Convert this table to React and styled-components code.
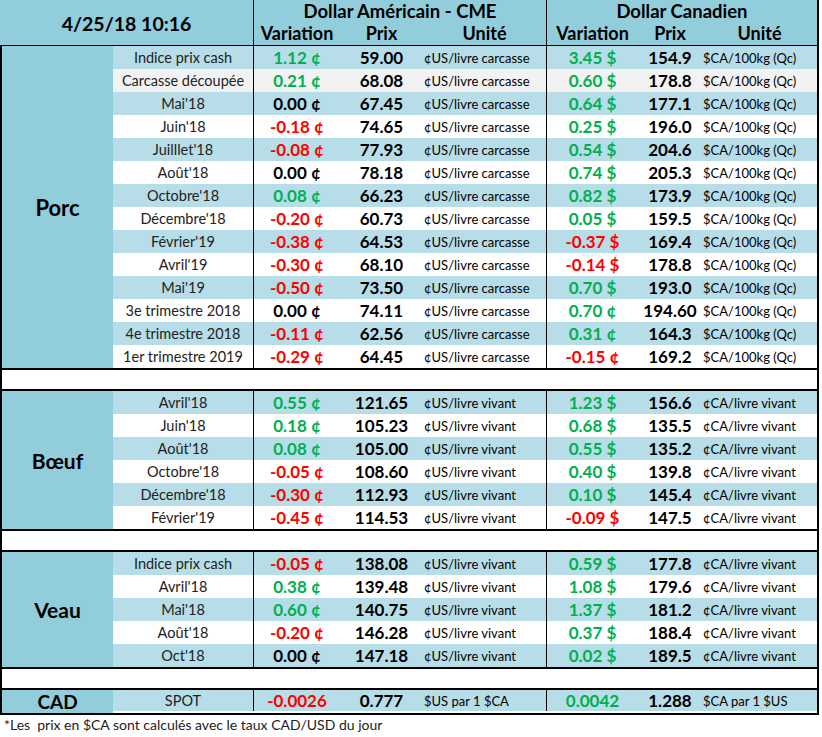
import React from 'react';
import styled, { createGlobalStyle } from 'styled-components';

const GlobalStyle = createGlobalStyle`
  body {
    margin: 0;
    background: #ffffff;
    font-family: Lato, "Open Sans", "Liberation Sans", sans-serif;
    color: #000;
  }
`;

const HEAD_BLUE = '#92CDDC';
const ROW_BLUE = '#B7DEE8';
const GREEN = '#00B050';
const RED = '#FF0000';
const COLS = '140px 87px 83px 123px 92px 64px 115px';

const Page = styled.div`
  width: 822px;
`;

const Sheet = styled.div`
  width: 819px;
  display: flex;
  flex-direction: column;
`;

const Header = styled.div`
  display: grid;
  grid-template-columns: 253px 293px 273px;
  height: 46px;
  background: ${HEAD_BLUE};
  border-bottom: 1px solid #000;
  box-sizing: border-box;
`;

const DateCell = styled.div`
  display: flex;
  align-items: center;
  justify-content: center;
  font-weight: 700;
  font-size: 19.5px;
  padding-top: 2px;
`;

const Group = styled.div`
  border-left: 1px solid #000;
  border-right: ${(p) => (p.$last ? '2px solid #000' : 'none')};
  display: grid;
  grid-template-rows: 23px 22px;
  grid-template-columns: ${(p) => p.$cols};
  font-weight: 700;
  font-size: 18px;
`;

const GroupTitle = styled.div`
  grid-column: 1 / -1;
  text-align: center;
  line-height: 23px;
  font-size: 18.5px;
`;

const SubHead = styled.div`
  text-align: center;
  line-height: 20px;
`;

const Block = styled.div`
  display: flex;
  border-left: 2px solid #000;
  border-right: 2px solid #000;
  border-bottom: ${(p) => (p.$closed ? '2px solid #000' : 'none')};
`;

const Category = styled.div`
  width: 111px;
  flex-shrink: 0;
  background: ${HEAD_BLUE};
  display: flex;
  align-items: center;
  justify-content: center;
  font-weight: 700;
  font-size: ${(p) => p.$size || 22}px;
`;

const Rows = styled.div`
  flex: 1;
  display: flex;
  flex-direction: column;
`;

const Row = styled.div`
  display: grid;
  grid-template-columns: ${COLS};
  height: ${(p) => p.$h || 23}px;
  background: ${(p) => p.$bg};
  align-items: center;
`;

const Label = styled.div`
  text-align: center;
  font-size: 14.5px;
  color: #222;
  white-space: nowrap;
`;

const Variation = styled.div`
  height: 100%;
  display: flex;
  align-items: center;
  justify-content: center;
  border-left: ${(p) => (p.$divider ? '1px solid #000' : 'none')};
  font-weight: 700;
  font-size: 17px;
  color: ${(p) => p.$tone};
  white-space: nowrap;
`;

const Price = styled.div`
  text-align: center;
  font-weight: 700;
  font-size: 17px;
`;

const Unit = styled.div`
  padding-left: 1px;
  font-size: 13px;
  white-space: nowrap;
  overflow: hidden;
`;

const Spacer = styled.div`
  height: 23px;
  box-sizing: border-box;
  border: 2px solid #000;
  background: #fff;
`;

const Note = styled.div`
  padding: 1px 0 0 4px;
  font-size: 14px;
  color: #222;
  white-space: pre;
`;

const tone = (v) => (v.startsWith('-') ? RED : v.startsWith('0.00 ') ? '#000' : GREEN);

const CARC_US = '¢US/livre carcasse';
const CARC_CA = '$CA/100kg (Qc)';
const VIV_US = '¢US/livre vivant';
const VIV_CA = '¢CA/livre vivant';

const porc = [
  ['Indice prix cash', '1.12 ¢', '59.00', '3.45 $', '154.9'],
  ['Carcasse découpée', '0.21 ¢', '68.08', '0.60 $', '178.8'],
  ["Mai'18", '0.00 ¢', '67.45', '0.64 $', '177.1'],
  ["Juin'18", '-0.18 ¢', '74.65', '0.25 $', '196.0'],
  ["Juilllet'18", '-0.08 ¢', '77.93', '0.54 $', '204.6'],
  ["Août'18", '0.00 ¢', '78.18', '0.74 $', '205.3'],
  ["Octobre'18", '0.08 ¢', '66.23', '0.82 $', '173.9'],
  ["Décembre'18", '-0.20 ¢', '60.73', '0.05 $', '159.5'],
  ["Février'19", '-0.38 ¢', '64.53', '-0.37 $', '169.4'],
  ["Avril'19", '-0.30 ¢', '68.10', '-0.14 $', '178.8'],
  ["Mai'19", '-0.50 ¢', '73.50', '0.70 $', '193.0'],
  ['3e trimestre 2018', '0.00 ¢', '74.11', '0.70 ¢', '194.60'],
  ['4e trimestre 2018', '-0.11 ¢', '62.56', '0.31 ¢', '164.3'],
  ['1er trimestre 2019', '-0.29 ¢', '64.45', '-0.15 ¢', '169.2'],
];

const boeuf = [
  ["Avril'18", '0.55 ¢', '121.65', '1.23 $', '156.6'],
  ["Juin'18", '0.18 ¢', '105.23', '0.68 $', '135.5'],
  ["Août'18", '0.08 ¢', '105.00', '0.55 $', '135.2'],
  ["Octobre'18", '-0.05 ¢', '108.60', '0.40 $', '139.8'],
  ["Décembre'18", '-0.30 ¢', '112.93', '0.10 $', '145.4'],
  ["Février'19", '-0.45 ¢', '114.53', '-0.09 $', '147.5'],
];

const veau = [
  ['Indice prix cash', '-0.05 ¢', '138.08', '0.59 $', '177.8'],
  ["Avril'18", '0.38 ¢', '139.48', '1.08 $', '179.6'],
  ["Mai'18", '0.60 ¢', '140.75', '1.37 $', '181.2'],
  ["Août'18", '-0.20 ¢', '146.28', '0.37 $', '188.4'],
  ["Oct'18", '0.00 ¢', '147.18', '0.02 $', '189.5'],
];

function rowColor(i, grayIndex) {
  if (i === grayIndex) return '#F2F2F2';
  return i % 2 === 0 ? ROW_BLUE : '#FFFFFF';
}

function DataBlock({ name, rows, unitUs, unitCa, grayIndex, size }) {
  return (
    <Block>
      <Category $size={size}>{name}</Category>
      <Rows>
        {rows.map(([label, varUs, prixUs, varCa, prixCa], i) => (
          <Row key={label + i} $bg={rowColor(i, grayIndex)}>
            <Label>{label}</Label>
            <Variation $divider $tone={tone(varUs)}>{varUs}</Variation>
            <Price>{prixUs}</Price>
            <Unit>{unitUs}</Unit>
            <Variation $divider $tone={tone(varCa)}>{varCa}</Variation>
            <Price>{prixCa}</Price>
            <Unit>{unitCa}</Unit>
          </Row>
        ))}
      </Rows>
    </Block>
  );
}

export default function App() {
  return (
    <Page>
      <GlobalStyle />
      <Sheet>
        <Header>
          <DateCell>4/25/18 10:16</DateCell>
          <Group $cols="86px 83px 1fr">
            <GroupTitle>Dollar Américain - CME</GroupTitle>
            <SubHead>Variation</SubHead>
            <SubHead>Prix</SubHead>
            <SubHead>Unité</SubHead>
          </Group>
          <Group $cols="91px 64px 1fr" $last>
            <GroupTitle>Dollar Canadien</GroupTitle>
            <SubHead>Variation</SubHead>
            <SubHead>Prix</SubHead>
            <SubHead>Unité</SubHead>
          </Group>
        </Header>

        <DataBlock name="Porc" rows={porc} unitUs={CARC_US} unitCa={CARC_CA} grayIndex={1} />
        <Spacer />
        <DataBlock name="Bœuf" rows={boeuf} unitUs={VIV_US} unitCa={VIV_CA} size={21} />
        <Spacer />
        <DataBlock name="Veau" rows={veau} unitUs={VIV_US} unitCa={VIV_CA} size={21} />
        <Spacer />
        <Block $closed>
          <Category $size={19}>CAD</Category>
          <Rows>
            <Row $bg={ROW_BLUE} $h={21}>
              <Label>SPOT</Label>
              <Variation $divider $tone={RED}>-0.0026</Variation>
              <Price>0.777</Price>
              <Unit>$US par 1 $CA</Unit>
              <Variation $divider $tone={GREEN}>0.0042</Variation>
              <Price>1.288</Price>
              <Unit>$CA par 1 $US</Unit>
            </Row>
          </Rows>
        </Block>
      </Sheet>
      <Note>{'*Les  prix en $CA sont calculés avec le taux CAD/USD du jour'}</Note>
    </Page>
  );
}
